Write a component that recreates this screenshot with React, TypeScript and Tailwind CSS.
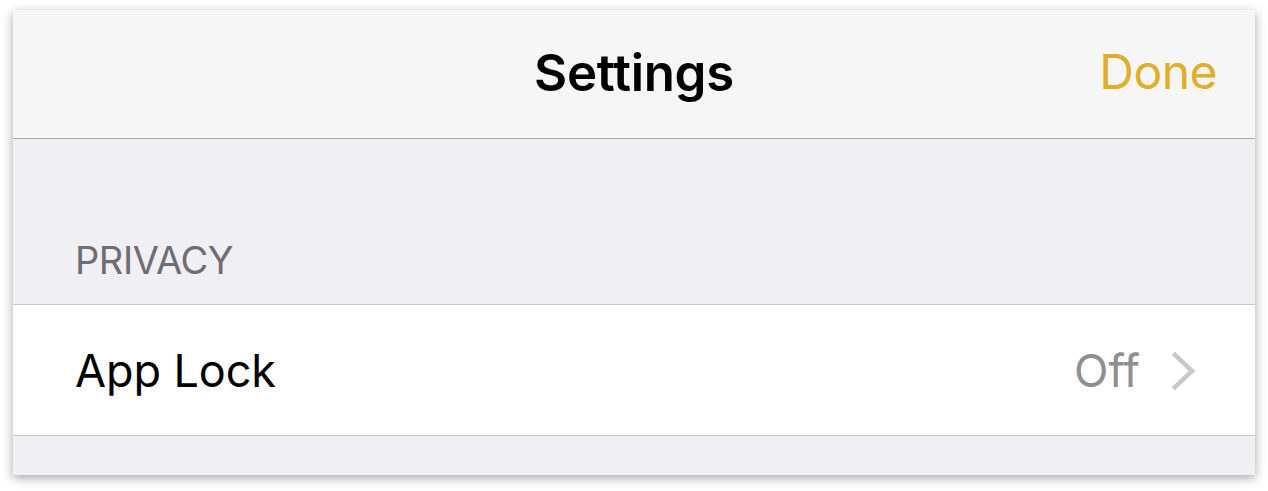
export default function App() {
  const font = { fontFamily: 'Inter, "Noto Sans", sans-serif' };
  return (
    <div className="w-[1268px] h-[491px] bg-white pt-[10px] pl-[13px]" style={font}>
      <div className="w-[1242px] h-[465px] flex flex-col bg-[#efeff4] shadow-[0_3px_10px_rgba(0,0,0,0.35)]">
        <div className="h-[129px] shrink-0 bg-[#f6f6f7] border-b border-[#a9a9ac] relative flex items-center justify-center">
          <div className="text-[51px] font-semibold text-black leading-none tracking-[-0.3px] -mt-[3px]">Settings</div>
          <div className="absolute right-[38px] top-0 h-full flex items-center">
            <div className="text-[48px] text-[#e1ae2a] leading-none -mt-[5px] tracking-[-0.5px]">Done</div>
          </div>
        </div>
        <div className="h-[166px] shrink-0 pt-[102px] pl-[62px] border-b border-[#c8c7cc] box-border">
          <div className="text-[38px] text-[#6d6d72] leading-none tracking-[-0.4px]">PRIVACY</div>
        </div>
        <div className="h-[131px] shrink-0 bg-white border-b border-[#c8c7cc] flex items-center pl-[62px] pr-[58px]">
          <div className="text-[45px] text-black leading-none flex-1 tracking-[-0.1px]">App Lock</div>
          <div className="text-[45px] text-[#8e8e93] leading-none tracking-[0px]">Off</div>
          <svg width="26" height="40" viewBox="0 0 26 40" className="ml-[31px] mt-[2px]">
            <path d="M4 4 L21 20 L4 36" fill="none" stroke="#c7c7cc" strokeWidth="4.5" strokeLinecap="square" strokeLinejoin="miter" />
          </svg>
        </div>
      </div>
    </div>
  );
}
